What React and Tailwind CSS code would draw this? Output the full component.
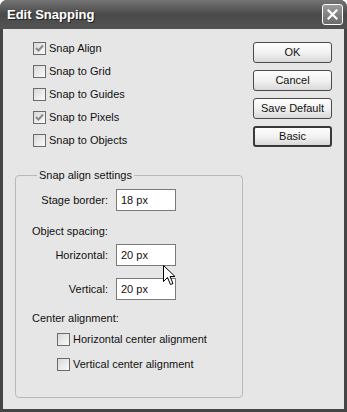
const font = { fontFamily: '"Liberation Sans", Arial, sans-serif' }

function Check({ checked }) {
  return (
    <span className="w-[13px] h-[13px] flex-shrink-0 border border-[#6b6b6b] bg-gradient-to-br from-[#d8d8d8] to-[#fbfbfb] flex items-center justify-center">
      {checked && (
        <svg width="9" height="9" viewBox="0 0 9 9">
          <path d="M1 4 L3.5 6.5 L8 1.5" fill="none" stroke="#8a8a8a" strokeWidth="2" />
        </svg>
      )}
    </span>
  )
}

function CheckRow({ label, checked }) {
  return (
    <div className="flex items-center h-[13px] gap-[3px] text-[11px] leading-[13px] text-[#111]">
      <Check checked={checked} />
      <span>{label}</span>
    </div>
  )
}

function XpButton({ children, primary }) {
  return (
    <button className={`w-[79px] h-[21px] rounded-[3px] bg-gradient-to-b from-[#fdfdfd] via-[#f2f2f2] to-[#d9d9d9] text-[11px] text-[#111] ${primary ? 'border-2 border-[#3a3a3a]' : 'border border-[#4a4a4a]'}`}>
      {children}
    </button>
  )
}

function FieldRow({ label, value, className = '' }) {
  return (
    <div className={`flex items-center ${className}`}>
      <span className="w-[76px] text-right text-[11px] leading-[13px] text-[#111]">{label}</span>
      <div className="ml-[8px] w-[60px] h-[22px] bg-white border border-[#7a7a7a] flex items-center pl-[4px] text-[11px] text-[#111]">
        {value}
      </div>
    </div>
  )
}

export default function App() {
  return (
    <div className="w-[347px] h-[412px] bg-[#454545] rounded-t-[7px] flex flex-col" style={font}>
      <div className="h-[29px] flex items-center justify-between pl-[7px] pr-[4px] rounded-t-[7px] bg-gradient-to-b from-[#747474] via-[#4a4a4a] to-[#535353]">
        <span className="text-white font-bold text-[13px] [text-shadow:1px_1px_0_#222]">Edit Snapping</span>
        <div className="w-[21px] h-[21px] rounded-[3px] border border-white bg-gradient-to-b from-[#9a9a9a] to-[#6c6c6c] flex items-center justify-center">
          <svg width="11" height="11" viewBox="0 0 11 11">
            <path d="M1.5 1.5 L9.5 9.5 M9.5 1.5 L1.5 9.5" stroke="white" strokeWidth="2.2" strokeLinecap="square" />
          </svg>
        </div>
      </div>

      <div className="flex-1 mx-[3px] mb-[3px] bg-[#e6e6e6] relative">
        <div className="flex pt-[13px]">
          <div className="flex flex-col gap-[10px] pl-[30px] w-[250px]">
            <CheckRow label="Snap Align" checked />
            <CheckRow label="Snap to Grid" />
            <CheckRow label="Snap to Guides" />
            <CheckRow label="Snap to Pixels" checked />
            <CheckRow label="Snap to Objects" />
          </div>
          <div className="flex flex-col gap-[7px]">
            <XpButton>OK</XpButton>
            <XpButton>Cancel</XpButton>
            <XpButton>Save Default</XpButton>
            <XpButton primary>Basic</XpButton>
          </div>
        </div>

        <fieldset className="ml-[12px] mt-[22px] w-[228px] border border-[#b9b9b9] rounded-[4px] pl-[16px] pb-[26px]">
          <legend className="ml-[5px] px-[2px] text-[11px] leading-[13px] text-[#111]">Snap align settings</legend>
          <FieldRow label="Stage border:" value="18 px" className="mt-[7px]" />
          <div className="mt-[14px] text-[11px] leading-[13px] text-[#111]">Object spacing:</div>
          <FieldRow label="Horizontal:" value="20 px" className="mt-[6px]" />
          <FieldRow label="Vertical:" value="20 px" className="mt-[12px]" />
          <div className="mt-[12px] text-[11px] leading-[13px] text-[#111]">Center alignment:</div>
          <div className="pl-[25px] flex flex-col gap-[12px] mt-[8px]">
            <CheckRow label="Horizontal center alignment" />
            <CheckRow label="Vertical center alignment" />
          </div>
        </fieldset>

        <svg className="absolute left-[160px] top-[236px]" width="13" height="21" viewBox="0 0 13 21">
          <path d="M0.5 0.5 L0.5 16.5 L4.5 12.5 L7.5 19.5 L10 18.5 L7 11.5 L12 11.5 Z" fill="white" stroke="black" strokeWidth="1" strokeLinejoin="miter" />
        </svg>
      </div>
    </div>
  )
}
